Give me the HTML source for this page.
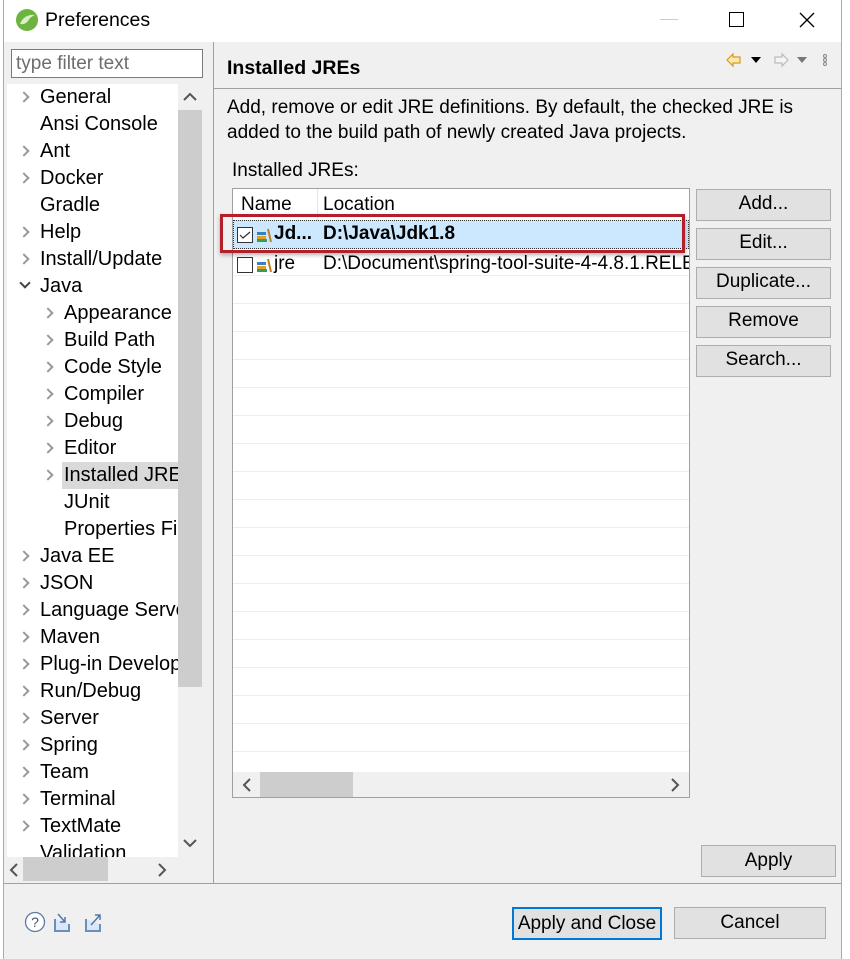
<!DOCTYPE html>
<html><head><meta charset="utf-8"><style>
*{box-sizing:border-box;margin:0;padding:0}
body{width:850px;height:959px;overflow:hidden;background:#fff;font-family:"Liberation Sans","Noto Sans CJK SC",sans-serif;color:#000;position:relative}
.a{position:absolute}
.t{font-size:19px;white-space:nowrap;line-height:22px}
#tree .t{font-size:20px}
.chev{position:absolute;width:8px;height:8px;border-right:2px solid #999;border-bottom:2px solid #999;transform:rotate(-45deg)}
.btn{position:absolute;background:#e1e1e1;border:1px solid #adadad;font-size:19px;text-align:center;line-height:28px}
</style></head><body>
<div class="a" style="left:3px;top:0;width:839px;height:959px;background:#f0f0f0;border-left:1px solid #aaa;border-right:1px solid #aaa"></div>
<div class="a" style="left:4px;top:0;width:837px;height:42px;background:#fff"></div>
<svg class="a" style="left:14px;top:8px" width="26" height="24" viewBox="0 0 26 24"><circle cx="13" cy="12" r="11" fill="#6db33f"/><path d="M6 16 Q10 6 21 7 Q16 9 14 13 Q11 17 6 16Z" fill="#d8f0c8"/></svg>
<div class="a t" style="left:45px;top:9px;font-size:19.5px">Preferences</div>
<div class="a" style="left:660px;top:19px;width:18px;height:1px;background:#ccc"></div>
<div class="a" style="left:729px;top:12px;width:15px;height:15px;border:1.5px solid #000"></div>
<svg class="a" style="left:799px;top:12px" width="16" height="16"><path d="M1 1L15 15M15 1L1 15" stroke="#000" stroke-width="1.3"/></svg>
<div class="a" style="left:11px;top:49px;width:192px;height:29px;background:#fff;border:1px solid #7a7a7a"></div>
<div class="a t" style="left:16px;top:53px;color:#6d6d6d">type filter text</div>
<div class="a" style="left:7px;top:84px;width:171px;height:773px;background:#fff"></div>
<div class="a" style="left:178px;top:84px;width:24px;height:773px;background:#f0f0f0"></div>
<div class="a" style="left:178px;top:110px;width:24px;height:577px;background:#cdcdcd"></div>
<svg class="a" style="left:182px;top:90px" width="16" height="12"><path d="M2 10L8 4L14 10" stroke="#555" stroke-width="2" fill="none"/></svg>
<svg class="a" style="left:182px;top:838px" width="16" height="12"><path d="M2 2L8 8L14 2" stroke="#555" stroke-width="2" fill="none"/></svg>
<div class="a" style="left:7px;top:857px;width:195px;height:24px;background:#f0f0f0"></div>
<div class="a" style="left:23px;top:857px;width:85px;height:24px;background:#cdcdcd"></div>
<svg class="a" style="left:8px;top:862px" width="12" height="16"><path d="M9 2L3 8L9 14" stroke="#555" stroke-width="2" fill="none"/></svg>
<svg class="a" style="left:156px;top:862px" width="12" height="16"><path d="M3 2L9 8L3 14" stroke="#555" stroke-width="2" fill="none"/></svg>
<div class="a" style="left:62px;top:462px;width:116px;height:27px;background:#d9d9d9"></div>
<div id="tree" class="a" style="left:0;top:0;width:178px;height:857px;overflow:hidden;clip-path:inset(84px 0 0 7px)">
<div class="chev" style="left:20px;top:93px"></div><div class="a t" style="left:40px;top:86px">General</div>
<div class="a t" style="left:40px;top:113px">Ansi Console</div>
<div class="chev" style="left:20px;top:147px"></div><div class="a t" style="left:40px;top:140px">Ant</div>
<div class="chev" style="left:20px;top:174px"></div><div class="a t" style="left:40px;top:167px">Docker</div>
<div class="a t" style="left:40px;top:194px">Gradle</div>
<div class="chev" style="left:20px;top:228px"></div><div class="a t" style="left:40px;top:221px">Help</div>
<div class="chev" style="left:20px;top:255px"></div><div class="a t" style="left:40px;top:248px">Install/Update</div>
<div class="chev" style="left:21px;top:279px;transform:rotate(45deg);border-color:#444"></div><div class="a t" style="left:40px;top:275px">Java</div>
<div class="chev" style="left:44px;top:309px"></div><div class="a t" style="left:64px;top:302px">Appearance</div>
<div class="chev" style="left:44px;top:336px"></div><div class="a t" style="left:64px;top:329px">Build Path</div>
<div class="chev" style="left:44px;top:363px"></div><div class="a t" style="left:64px;top:356px">Code Style</div>
<div class="chev" style="left:44px;top:390px"></div><div class="a t" style="left:64px;top:383px">Compiler</div>
<div class="chev" style="left:44px;top:417px"></div><div class="a t" style="left:64px;top:410px">Debug</div>
<div class="chev" style="left:44px;top:444px"></div><div class="a t" style="left:64px;top:437px">Editor</div>
<div class="chev" style="left:44px;top:471px"></div><div class="a t" style="left:64px;top:464px">Installed JREs</div>
<div class="a t" style="left:64px;top:491px">JUnit</div>
<div class="a t" style="left:64px;top:518px">Properties Files Editor</div>
<div class="chev" style="left:20px;top:552px"></div><div class="a t" style="left:40px;top:545px">Java EE</div>
<div class="chev" style="left:20px;top:579px"></div><div class="a t" style="left:40px;top:572px">JSON</div>
<div class="chev" style="left:20px;top:606px"></div><div class="a t" style="left:40px;top:599px">Language Servers</div>
<div class="chev" style="left:20px;top:633px"></div><div class="a t" style="left:40px;top:626px">Maven</div>
<div class="chev" style="left:20px;top:660px"></div><div class="a t" style="left:40px;top:653px">Plug-in Development</div>
<div class="chev" style="left:20px;top:687px"></div><div class="a t" style="left:40px;top:680px">Run/Debug</div>
<div class="chev" style="left:20px;top:714px"></div><div class="a t" style="left:40px;top:707px">Server</div>
<div class="chev" style="left:20px;top:741px"></div><div class="a t" style="left:40px;top:734px">Spring</div>
<div class="chev" style="left:20px;top:768px"></div><div class="a t" style="left:40px;top:761px">Team</div>
<div class="chev" style="left:20px;top:795px"></div><div class="a t" style="left:40px;top:788px">Terminal</div>
<div class="chev" style="left:20px;top:822px"></div><div class="a t" style="left:40px;top:815px">TextMate</div>
<div class="a t" style="left:40px;top:842px">Validation</div>
</div>
<div class="a" style="left:213px;top:42px;width:1px;height:841px;background:#a0a0a0"></div>
<div class="a" style="left:4px;top:883px;width:837px;height:1px;background:#a0a0a0"></div>
<div class="a t" style="left:227px;top:57px;font-weight:bold;font-size:19.5px">Installed JREs</div>
<div class="a" style="left:214px;top:88px;width:627px;height:1px;background:#a0a0a0"></div>
<svg class="a" style="left:725px;top:52px" width="105" height="16"><path d="M2 8L8 2V5H15V11H8V14Z" fill="#fde9b0" stroke="#d99a1c" stroke-width="1.2"/><path d="M26 5H36L31 11Z" fill="#000"/><path d="M63 8L57 2V5H50V11H57V14Z" fill="#f5f5f5" stroke="#bbb" stroke-width="1.2"/><path d="M72 5H82L77 11Z" fill="#777"/><circle cx="100" cy="4" r="1.5" fill="none" stroke="#888"/><circle cx="100" cy="8" r="1.5" fill="none" stroke="#888"/><circle cx="100" cy="12" r="1.5" fill="none" stroke="#888"/></svg>
<div class="a t" style="left:227px;top:95px;line-height:25px">Add, remove or edit JRE definitions. By default, the checked JRE is<br>added to the build path of newly created Java projects.</div>
<div class="a t" style="left:232px;top:160px">Installed JREs:</div>
<div class="a" style="left:232px;top:188px;width:458px;height:610px;background:#fff;border:1px solid #a0a0a0;overflow:hidden">
<div class="a" style="left:84px;top:0;width:1px;height:583px;background:#e5e5e5"></div>
<div class="a" style="left:0;top:59px;width:456px;height:524px;background:repeating-linear-gradient(#fff 0,#fff 27px,#eee 27px,#eee 28px)"></div>
<div class="a t" style="left:8px;top:5px">Name</div>
<div class="a t" style="left:90px;top:5px">Location</div>
<div class="a" style="left:0;top:31px;width:456px;height:29px;background:#cce8ff;border:1px dotted #333"></div>
<div class="a" style="left:4px;top:38px;width:16px;height:16px;border:1px solid #333;background:#fff"></div>
<svg class="a" style="left:6px;top:41px" width="12" height="10"><path d="M1 5L4 8L11 2" stroke="#333" stroke-width="1.2" fill="none"/></svg>
<div class="a" style="left:4px;top:68px;width:16px;height:16px;border:1px solid #333;background:#fff"></div>
<svg class="a" style="left:23px;top:38px" width="16" height="16"><rect x="1" y="5" width="9" height="3" fill="#3a7fbf"/><rect x="1" y="9" width="9" height="3" fill="#e0a020"/><rect x="1" y="12" width="10" height="3" fill="#3b9a5a"/><path d="M12 2L15 15" stroke="#c08020" stroke-width="2"/></svg>
<svg class="a" style="left:23px;top:68px" width="16" height="16"><rect x="1" y="5" width="9" height="3" fill="#3a7fbf"/><rect x="1" y="9" width="9" height="3" fill="#e0a020"/><rect x="1" y="12" width="10" height="3" fill="#3b9a5a"/><path d="M12 2L15 15" stroke="#c08020" stroke-width="2"/></svg>
<div class="a t" style="left:41px;top:34px;font-weight:bold">Jd...</div>
<div class="a t" style="left:90px;top:34px;font-weight:bold">D:\Java\Jdk1.8</div>
<div class="a t" style="left:41px;top:64px">jre</div>
<div class="a t" style="left:90px;top:64px">D:\Document\spring-tool-suite-4-4.8.1.RELEASE</div>
<div class="a" style="left:0;top:583px;width:456px;height:25px;background:#f0f0f0"></div>
<div class="a" style="left:27px;top:583px;width:93px;height:25px;background:#cdcdcd"></div>
<svg class="a" style="left:8px;top:588px" width="12" height="16"><path d="M9 2L3 8L9 14" stroke="#555" stroke-width="2" fill="none"/></svg>
<svg class="a" style="left:436px;top:588px" width="12" height="16"><path d="M3 2L9 8L3 14" stroke="#555" stroke-width="2" fill="none"/></svg>
</div>
<div class="a" style="left:220px;top:214px;width:465px;height:39px;border:3px solid #b3202c;box-shadow:0 2px 4px rgba(0,0,0,.3)"></div>
<div class="btn" style="left:696px;top:189px;width:135px;height:32px">Add...</div>
<div class="btn" style="left:696px;top:228px;width:135px;height:32px">Edit...</div>
<div class="btn" style="left:696px;top:267px;width:135px;height:32px">Duplicate...</div>
<div class="btn" style="left:696px;top:306px;width:135px;height:32px">Remove</div>
<div class="btn" style="left:696px;top:345px;width:135px;height:32px">Search...</div>
<div class="btn" style="left:701px;top:845px;width:135px;height:32px;line-height:30px">Apply</div>
<div class="btn" style="left:512px;top:907px;width:150px;height:33px;border:2px solid #0078d7;line-height:29px">Apply and Close</div>
<div class="btn" style="left:674px;top:907px;width:152px;height:32px;line-height:30px">Cancel</div>
<svg class="a" style="left:24px;top:911px" width="86" height="22"><circle cx="11" cy="11" r="9.5" fill="#fff" stroke="#5a7aa0" stroke-width="1.3"/><text x="11" y="16" font-size="14" text-anchor="middle" fill="#456" font-family="Liberation Sans">?</text><path d="M31 8V20H45V13" stroke="#6a8fbf" stroke-width="2" fill="#dbe7f5"/><path d="M34 3L41 11M41 6V11H36" stroke="#4a7ab0" stroke-width="1.5" fill="none"/><path d="M62 8V20H76V13" stroke="#6a8fbf" stroke-width="2" fill="#dbe7f5"/><path d="M67 14L76 4M71 4H76V9" stroke="#4a7ab0" stroke-width="1.5" fill="none"/></svg>
</body></html>
